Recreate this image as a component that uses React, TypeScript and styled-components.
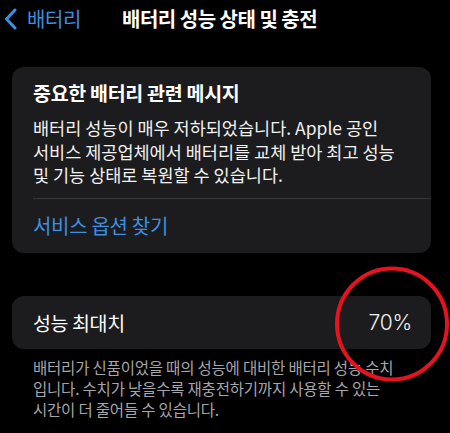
import React from "react";
import styled, { createGlobalStyle } from "styled-components";

const Global = createGlobalStyle`
  html, body { margin: 0; padding: 0; background: #000; }
  body {
    width: 450px;
    height: 433px;
    overflow: hidden;
    font-family: "Noto Sans CJK KR", "Noto Sans", sans-serif;
    color: #fff;
    -webkit-font-smoothing: antialiased;
  }
`;

const Screen = styled.div`
  position: relative;
  width: 450px;
  height: 433px;
  background: #000;
  display: flex;
  flex-direction: column;
`;

const NavBar = styled.div`
  height: 37px;
  display: flex;
  align-items: center;
`;

const BackButton = styled.div`
  display: flex;
  align-items: center;
  gap: 10px;
  padding-left: 4px;
  color: #3d8fe0;
  font-size: 20px;
  letter-spacing: -0.4px;
`;

const Title = styled.div`
  margin-left: 41px;
  font-size: 20px;
  font-weight: 700;
  letter-spacing: -0.5px;
  color: #fff;
`;

const Card = styled.div`
  margin: 0 19px 0 12px;
  background: #1c1c1e;
  border-radius: 12px;
  overflow: hidden;
`;

const MessageCard = styled(Card)`
  margin-top: 30px;
`;

const MessageBody = styled.div`
  padding: 13px 12px 11px 21px;
`;

const MessageTitle = styled.div`
  font-size: 19.5px;
  font-weight: 700;
  line-height: 26px;
  letter-spacing: -0.3px;
  margin-bottom: 10px;
`;

const MessageText = styled.div`
  font-size: 17.5px;
  line-height: 23.5px;
  letter-spacing: 0;
  color: #f2f2f2;
  white-space: nowrap;
`;

const Divider = styled.div`
  height: 1px;
  background: #38383a;
  margin-left: 21px;
`;

const LinkRow = styled.div`
  padding: 0 21px;
  height: 54px;
  display: flex;
  align-items: center;
  font-size: 20px;
  letter-spacing: -0.3px;
  color: #3d8fe0;
`;

const StatCard = styled(Card)`
  margin-top: 43px;
  height: 53px;
  display: flex;
  align-items: center;
  justify-content: space-between;
  padding: 0 19px 0 21px;
`;

const StatLabel = styled.div`
  font-size: 19.5px;
  letter-spacing: -0.4px;
`;

const StatValue = styled.div`
  font-family: Inter, "Noto Sans", sans-serif;
  font-weight: 300;
  font-size: 21px;
  letter-spacing: -0.2px;
  color: #f2f2f2;
`;

const Footnote = styled.div`
  margin: 8px 10px 0 33px;
  font-size: 15.5px;
  line-height: 21px;
  letter-spacing: -0.2px;
  color: #a5a5aa;
  white-space: nowrap;
`;

const Highlight = styled.svg`
  position: absolute;
  left: 334px;
  top: 265px;
  width: 118px;
  height: 118px;
  pointer-events: none;
`;

export default function App() {
  return (
    <>
      <Global />
      <Screen>
        <NavBar>
          <BackButton>
            <svg width="13" height="22" viewBox="0 0 13 22">
              <path d="M11 2 L2.5 11 L11 20" fill="none" stroke="#3d8fe0" strokeWidth="3" strokeLinecap="round" strokeLinejoin="round" />
            </svg>
            배터리
          </BackButton>
          <Title>배터리 성능 상태 및 충전</Title>
        </NavBar>
        <MessageCard>
          <MessageBody>
            <MessageTitle>중요한 배터리 관련 메시지</MessageTitle>
            <MessageText>
              배터리 성능이 매우 저하되었습니다. Apple 공인
              <br />
              서비스 제공업체에서 배터리를 교체 받아 최고 성능
              <br />
              및 기능 상태로 복원할 수 있습니다.
            </MessageText>
          </MessageBody>
          <Divider />
          <LinkRow>서비스 옵션 찾기</LinkRow>
        </MessageCard>
        <StatCard>
          <StatLabel>성능 최대치</StatLabel>
          <StatValue>70%</StatValue>
        </StatCard>
        <Footnote>
          배터리가 신품이었을 때의 성능에 대비한 배터리 성능 수치
          <br />
          입니다. 수치가 낮을수록 재충전하기까지 사용할 수 있는
          <br />
          시간이 더 줄어들 수 있습니다.
        </Footnote>
        <Highlight viewBox="0 0 118 118">
          <ellipse cx="58" cy="59" rx="55" ry="55.5" fill="none" stroke="#e3141f" strokeWidth="4" />
        </Highlight>
      </Screen>
    </>
  );
}
